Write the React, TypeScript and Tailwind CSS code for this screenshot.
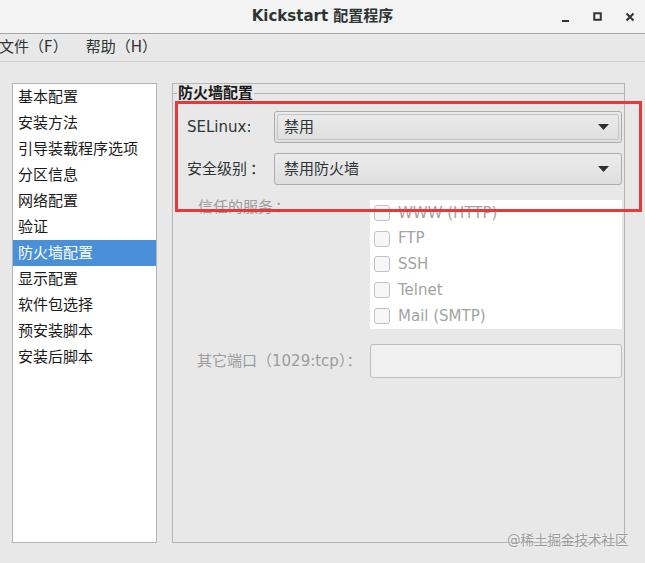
const FONT = '"DejaVu Sans", "Noto Sans CJK SC", sans-serif'

const sections = [
  '基本配置',
  '安装方法',
  '引导装载程序选项',
  '分区信息',
  '网络配置',
  '验证',
  '防火墙配置',
  '显示配置',
  '软件包选择',
  '预安装脚本',
  '安装后脚本',
]

const services = ['WWW (HTTP)', 'FTP', 'SSH', 'Telnet', 'Mail (SMTP)']

function Arrow() {
  return (
    <svg width="11" height="6" viewBox="0 0 11 6" className="shrink-0">
      <path d="M0 0 H11 L5.5 6 Z" fill="#2e2e2e" />
    </svg>
  )
}

function Combo({ value, focused }: { value: string; focused?: boolean }) {
  return (
    <div className="flex-1 h-[32px] rounded-[3px] border border-[#acacac] bg-gradient-to-b from-[#ececec] to-[#dedede] p-[2px]">
      <div
        className={
          'h-full flex items-center pl-[6px] pr-[9px] rounded-[2px] ' +
          (focused ? 'border border-[#c4c4c4]' : 'border border-transparent')
        }
      >
        <span className="flex-1 text-[15px] text-[#2e3436]">{value}</span>
        <Arrow />
      </div>
    </div>
  )
}

export default function App() {
  return (
    <div
      className="relative w-[645px] h-[563px] overflow-hidden bg-[#e8e8e8] flex flex-col"
      style={{ fontFamily: FONT }}
    >
      {/* title bar */}
      <div className="h-[34px] shrink-0 bg-[#f3f3f3] border-b border-[#a6a6a6] flex items-center relative">
        <div className="w-full text-center text-[15px] font-bold text-[#2e3436]">Kickstart 配置程序</div>
        <div className="absolute right-[10px] top-0 h-full flex items-center gap-[22px]">
          <svg width="10" height="12" viewBox="0 0 10 12">
            <rect x="1" y="9" width="7" height="2" fill="#2e3436" />
          </svg>
          <svg width="10" height="12" viewBox="0 0 10 12">
            <rect x="1.25" y="2.25" width="6.5" height="6.5" fill="none" stroke="#2e3436" strokeWidth="2" />
          </svg>
          <svg width="10" height="12" viewBox="0 0 10 12">
            <path d="M1.5 2.5 L8.5 9.5 M8.5 2.5 L1.5 9.5" stroke="#2e3436" strokeWidth="2" />
          </svg>
        </div>
      </div>

      {/* menu bar */}
      <div className="h-[28px] shrink-0 border-b border-[#cfcfcf] flex items-center gap-[18px] text-[15px] text-[#2e3436] -ml-[1px] pb-[1px]">
        <span>文件（F）</span>
        <span>帮助（H）</span>
      </div>

      {/* body */}
      <div className="flex pl-[12px] pt-[21px] gap-[15px]">
        <div className="w-[145px] h-[460px] bg-white border border-[#b4b4b4] flex flex-col">
          {sections.map((s) => (
            <div
              key={s}
              className={
                'h-[26px] flex items-center pl-[5px] text-[15px] ' +
                (s === '防火墙配置' ? 'bg-[#4a90d9] text-white' : 'text-[#1a1a1a]')
              }
            >
              {s}
            </div>
          ))}
        </div>

        <div className="w-[453px] h-[460px] border border-[#b4b4b4] flex flex-col">
          <div className="h-[19px] flex items-center">
            <div className="w-[4px] h-px bg-[#b4b4b4]" />
            <span className="px-[1px] text-[15px] font-bold text-[#1a1a1a] leading-none">防火墙配置</span>
            <div className="flex-1 h-px bg-[#b4b4b4]" />
          </div>

          <div className="mt-[8px] flex items-center pl-[14px] pr-[2px]">
            <span className="w-[87px] text-[15px] text-[#2e3436]">SELinux:</span>
            <Combo value="禁用" focused />
          </div>

          <div className="mt-[10px] flex items-center pl-[14px] pr-[2px]">
            <span className="w-[87px] text-[15px] text-[#2e3436]">
              安全级别<span className="ml-[3px]">：</span>
            </span>
            <Combo value="禁用防火墙" />
          </div>

          <div className="mt-[15px] flex pl-[25px] pr-[2px]">
            <span className="w-[172px] text-[15px] text-[#9c9c9c] -mt-[4px]">
              信任的服务<span className="ml-[2px]">：</span>
            </span>
            <div className="flex-1 h-[129px] bg-white flex flex-col pl-[4px]">
              {services.map((s) => (
                <div key={s} className="h-[26px] flex items-center gap-[8px]">
                  <div className="w-[16px] h-[16px] rounded-[3px] border border-[#c2c2c2] bg-[#f7f7f7]" />
                  <span className="text-[15px] text-[#a3a3a3]">{s}</span>
                </div>
              ))}
            </div>
          </div>

          <div className="mt-[15px] flex items-center pl-[24px] pr-[2px]">
            <span className="w-[173px] text-[15px] text-[#9c9c9c]">其它端口（1029:tcp）：</span>
            <div className="flex-1 h-[34px] rounded-[3px] border border-[#bdbdbd] bg-[#f0f0f0]" />
          </div>
        </div>
      </div>

      {/* red annotation box */}
      <div className="absolute left-[175px] top-[101px] w-[467px] h-[111px] border-[3px] border-[#e5393c]" />

      {/* watermark */}
      <div className="absolute left-[507px] top-[530px] text-[13.5px] text-[#9a9a9a] [text-shadow:0_0_2px_#ffffff]">
        @稀土掘金技术社区
      </div>
    </div>
  )
}
